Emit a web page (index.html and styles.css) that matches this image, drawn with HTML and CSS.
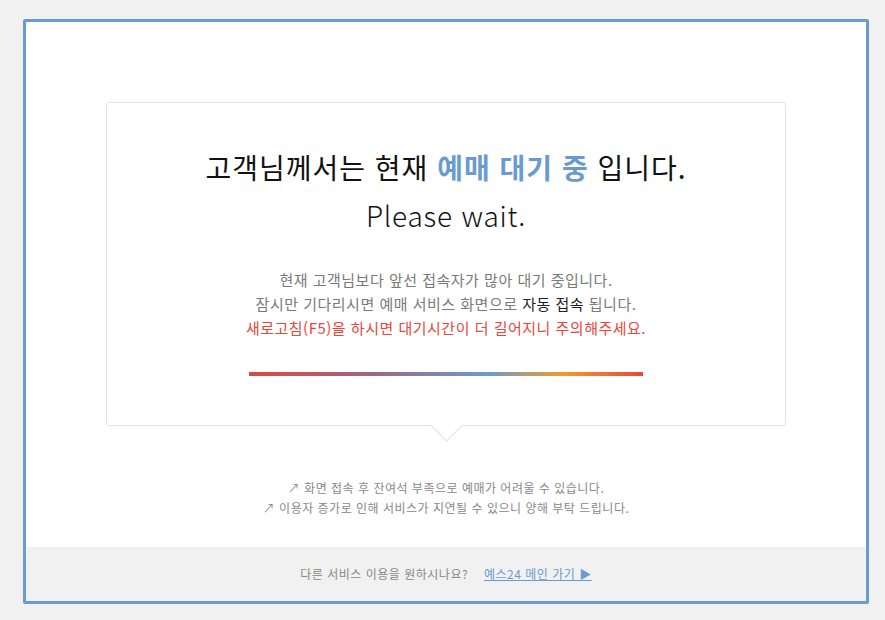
FILE: index.html
```html
<!DOCTYPE html>
<html lang="ko">
<head>
  <meta charset="UTF-8">
  <title>예매 대기</title>
  <link rel="stylesheet" href="styles.css">
</head>
<body>
  <div class="wait-box">
    <div class="wait-main">
      <div class="wait-card">
        <h1 class="wait-title">고객님께서는 현재 <strong>예매 대기 중</strong> 입니다.</h1>
        <p class="wait-en">Please wait.</p>
        <div class="wait-desc">
          <p>현재 고객님보다 앞선 접속자가 많아 대기 중입니다.</p>
          <p>잠시만 기다리시면 예매 서비스 화면으로 <em>자동 접속</em> 됩니다.</p>
          <p class="warn">새로고침(F5)을 하시면 대기시간이 더 길어지니 주의해주세요.</p>
        </div>
        <div class="progress"></div>
        <span class="pointer"></span>
      </div>
      <ul class="notes">
        <li>↗ 화면 접속 후 잔여석 부족으로 예매가 어려울 수 있습니다.</li>
        <li>↗ 이용자 증가로 인해 서비스가 지연될 수 있으니 양해 부탁 드립니다.</li>
      </ul>
    </div>
    <div class="wait-foot">
      다른 서비스 이용을 원하시나요?
      <a href="#">예스24 메인 가기 ▶</a>
    </div>
  </div>
</body>
</html>
```

FILE: styles.css
```css
html, body {
  height: 100%;
}

body {
  margin: 0;
  background: #f1f1f1;
  font-family: "Noto Sans CJK KR", "Noto Sans", sans-serif;
  color: #222;
}

.wait-box {
  box-sizing: border-box;
  width: 846px;
  height: 585px;
  margin: 19px 0 0 23px;
  border: 3px solid #6a9bd0;
  border-radius: 2px;
  background: #fff;
  display: flex;
  flex-direction: column;
}

.wait-main {
  flex: 1;
  padding: 80px 80px 0;
}

.wait-card {
  position: relative;
  box-sizing: border-box;
  height: 324px;
  border: 1px solid #e2e2e2;
  border-radius: 3px;
  background: #fff;
  text-align: center;
  padding-top: 40px;
}

.wait-title {
  margin: 0;
  font-size: 28px;
  font-weight: normal;
  letter-spacing: 1px;
  line-height: 48px;
  color: #111;
}

.wait-title strong {
  color: #6a9bd0;
  font-weight: bold;
}

.wait-en {
  margin: 3px 0 0;
  font-size: 28px;
  font-weight: 300;
  letter-spacing: 0.8px;
  line-height: 42px;
  color: #111;
}

.wait-desc {
  margin-top: 32px;
  font-size: 15px;
  letter-spacing: 0.5px;
  line-height: 24px;
  color: #7a7a7a;
}

.wait-desc p {
  margin: 0;
}

.wait-desc em {
  font-style: normal;
  color: #222;
}

.wait-desc .warn {
  color: #e8473b;
}

.progress {
  width: 394px;
  height: 4px;
  margin: 32px auto 0;
  background: linear-gradient(to right, #de4a3c 0%, #a1647f 30%, #6a9bd0 60%, #f39a2b 80%, #e8473b 100%);
}

.pointer {
  position: absolute;
  left: 50%;
  bottom: -12px;
  width: 22px;
  height: 22px;
  margin-left: -11px;
  background: #fff;
  border-right: 1px solid #e2e2e2;
  border-bottom: 1px solid #e2e2e2;
  transform: rotate(45deg);
}

.notes {
  list-style: none;
  margin: 52px 0 0;
  padding: 0;
  text-align: center;
  font-size: 12px;
  letter-spacing: 0.5px;
  line-height: 20px;
  color: #888;
}

.wait-foot {
  height: 54px;
  background: #f1f1f1;
  text-align: center;
  font-size: 12px;
  letter-spacing: 0.5px;
  line-height: 54px;
  color: #888;
}

.wait-foot a {
  margin-left: 12px;
  color: #6a9bd0;
  text-decoration: underline;
}
```
